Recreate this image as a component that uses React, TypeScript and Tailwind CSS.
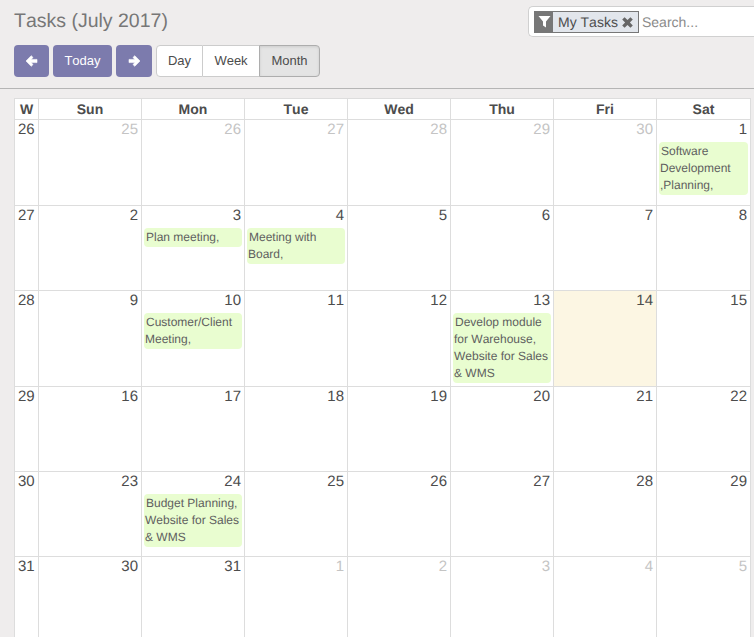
import React from "react";

const days = ["Sun", "Mon", "Tue", "Wed", "Thu", "Fri", "Sat"];

type Cell = { d: number; muted?: boolean; today?: boolean; event?: string[] };

const rows: { w: number; h: string; cells: Cell[] }[] = [
  {
    w: 26,
    h: "h-[86px]",
    cells: [
      { d: 25, muted: true },
      { d: 26, muted: true },
      { d: 27, muted: true },
      { d: 28, muted: true },
      { d: 29, muted: true },
      { d: 30, muted: true },
      { d: 1, event: ["Software", "Development", ",Planning,"] },
    ],
  },
  {
    w: 27,
    h: "h-[85px]",
    cells: [
      { d: 2 },
      { d: 3, event: ["Plan meeting,"] },
      { d: 4, event: ["Meeting with", "Board,"] },
      { d: 5 },
      { d: 6 },
      { d: 7 },
      { d: 8 },
    ],
  },
  {
    w: 28,
    h: "h-[96px]",
    cells: [
      { d: 9 },
      { d: 10, event: ["Customer/Client", "Meeting,"] },
      { d: 11 },
      { d: 12 },
      { d: 13, event: ["Develop module", "for Warehouse,", "Website for Sales", "& WMS"] },
      { d: 14, today: true },
      { d: 15 },
    ],
  },
  {
    w: 29,
    h: "h-[85px]",
    cells: [{ d: 16 }, { d: 17 }, { d: 18 }, { d: 19 }, { d: 20 }, { d: 21 }, { d: 22 }],
  },
  {
    w: 30,
    h: "h-[85px]",
    cells: [
      { d: 23 },
      { d: 24, event: ["Budget Planning,", "Website for Sales", "& WMS"] },
      { d: 25 },
      { d: 26 },
      { d: 27 },
      { d: 28 },
      { d: 29 },
    ],
  },
  {
    w: 31,
    h: "h-[90px]",
    cells: [
      { d: 30 },
      { d: 31 },
      { d: 1, muted: true },
      { d: 2, muted: true },
      { d: 3, muted: true },
      { d: 4, muted: true },
      { d: 5, muted: true },
    ],
  },
];

function Arrow({ flip }: { flip?: boolean }) {
  return (
    <svg width="13" height="12" viewBox="0 0 13 12" className={flip ? "rotate-180" : ""}>
      <path
        d="M6.2 0.7 L1 6 L6.2 11.3 L8 9.6 L6.2 7.6 L12 7.6 L12 4.4 L6.2 4.4 L8 2.4 Z"
        fill="#ffffff"
        stroke="#ffffff"
        strokeWidth="0.6"
        strokeLinejoin="round"
      />
    </svg>
  );
}

export default function App() {
  return (
    <div
      className="h-[637px] w-[754px] overflow-hidden bg-[#efeded] text-[#4c4c4c] [font-kerning:none] [text-rendering:geometricPrecision]"
      style={{ fontFamily: '"Liberation Sans", Arial, sans-serif' }}
    >
      <div className="h-[89px] border-b border-[#b5b5b5] pl-[14px]">
        <div className="flex justify-between">
          <h1 className="pt-[10px] text-[19.5px] leading-[22px] text-[#777777]">Tasks (July 2017)</h1>
          <div className="mt-[6px] flex h-[31px] w-[226px] items-center rounded-l-[5px] border border-r-0 border-[#d0d0d0] bg-white pl-[5px]">
            <div className="flex h-[22px] w-[105px] items-stretch border border-[#777777] bg-[#e2e6ec]">
              <div className="flex w-[18px] items-center justify-center bg-[#777777]">
                <svg width="13" height="13" viewBox="0 0 13 13">
                  <path d="M0.5 1 H12.5 L8 6.5 V12.5 L5 10.5 V6.5 Z" fill="#ffffff" />
                </svg>
              </div>
              <span className="pl-[5px] text-[14px] leading-[20px] text-[#4c4c4c]">My Tasks</span>
              <svg width="13" height="13" viewBox="0 0 13 13" className="mt-[4px] ml-[3px]">
                <path d="M1.2 3.6 L3.6 1.2 L6.5 4.1 L9.4 1.2 L11.8 3.6 L8.9 6.5 L11.8 9.4 L9.4 11.8 L6.5 8.9 L3.6 11.8 L1.2 9.4 L4.1 6.5 Z" fill="#666666" />
              </svg>
            </div>
            <span className="pl-[3px] pt-[2px] text-[14px] text-[#8a8a8a]">Search...</span>
          </div>
        </div>
        <div className="mt-[8px] flex h-[32px] text-[13px]">
          <button className="flex w-[35px] items-center justify-center rounded-[4px] bg-[#7c7bad]">
            <Arrow />
          </button>
          <button className="ml-[4px] w-[59px] rounded-[4px] bg-[#7c7bad] text-white">Today</button>
          <button className="ml-[4px] flex w-[36px] items-center justify-center rounded-[4px] bg-[#7c7bad]">
            <Arrow flip />
          </button>
          <div className="ml-[4px] flex">
            <button className="w-[47px] rounded-l-[4px] border border-[#cccccc] bg-white">Day</button>
            <button className="w-[56px] border-y border-[#cccccc] bg-white">Week</button>
            <button className="w-[61px] rounded-r-[4px] border border-[#adadad] bg-[#e4e4e4] shadow-[inset_0_1px_3px_rgba(0,0,0,0.1)]">
              Month
            </button>
          </div>
        </div>
      </div>

      <div className="ml-[14px] mt-[9px] w-[737px] border-l border-t border-[#dddddd] bg-white">
        <div className="grid h-[21px] grid-cols-[24px_repeat(6,103px)_94px]">
          <div className="border-b border-r border-[#dddddd] text-center text-[14px] font-bold leading-[20px]">W</div>
          {days.map((d) => (
            <div key={d} className="border-b border-r border-[#dddddd] text-center text-[14px] font-bold leading-[20px]">
              {d}
            </div>
          ))}
        </div>
        {rows.map((r) => (
          <div key={r.w} className={`grid grid-cols-[24px_repeat(6,103px)_94px] ${r.h}`}>
            <div className="border-b border-r border-[#dddddd] pl-[3px] pt-[1px] text-[15px] leading-[17px]">{r.w}</div>
            {r.cells.map((c, i) => (
              <div
                key={i}
                className={`border-b border-r border-[#dddddd] pt-[1px] ${c.today ? "bg-[#fcf6e3]" : ""}`}
              >
                <div className={`pr-[3px] text-right text-[15px] leading-[17px] ${c.muted ? "text-[#c4c4c4]" : ""}`}>{c.d}</div>
                {c.event && (
                  <div className="mx-[2px] mt-[4px] rounded-[4px] bg-[#e9fdd0] pb-[1px] pl-[1px] pt-[1px] text-[12px] leading-[17px] text-[#5f5f5f]">
                    {c.event.map((l, k) => (
                      <div key={k} className={k === 0 ? "pl-[1px]" : ""}>
                        {l}
                      </div>
                    ))}
                  </div>
                )}
              </div>
            ))}
          </div>
        ))}
      </div>
    </div>
  );
}
